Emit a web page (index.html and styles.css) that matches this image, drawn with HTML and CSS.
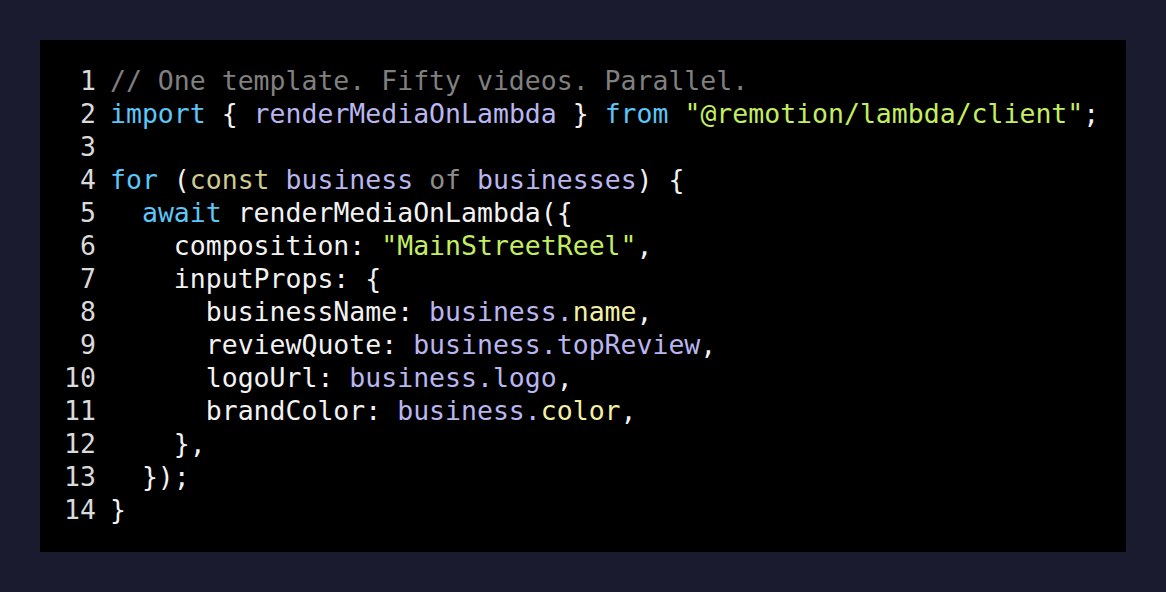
FILE: index.html
```html
<!DOCTYPE html>
<html>
<head>
<meta charset="utf-8">
<link rel="stylesheet" href="styles.css">
</head>
<body>
<div class="page">
  <div class="code">
    <div class="line"><span class="ln">1</span><span class="src"><span class="cm">// One template. Fifty videos. Parallel.</span></span></div>
    <div class="line"><span class="ln">2</span><span class="src"><span class="kw">import</span> { <span class="id">renderMediaOnLambda</span> } <span class="kw">from</span> <span class="str">"@remotion/lambda/client"</span>;</span></div>
    <div class="line"><span class="ln">3</span><span class="src"></span></div>
    <div class="line"><span class="ln">4</span><span class="src"><span class="kw">for</span> (<span class="dc">const</span> <span class="id">business</span> <span class="of">of</span> <span class="id">businesses</span>) {</span></div>
    <div class="line"><span class="ln">5</span><span class="src">  <span class="kw">await</span> renderMediaOnLambda({</span></div>
    <div class="line"><span class="ln">6</span><span class="src">    composition: <span class="str">"MainStreetReel"</span>,</span></div>
    <div class="line"><span class="ln">7</span><span class="src">    inputProps: {</span></div>
    <div class="line"><span class="ln">8</span><span class="src">      businessName: <span class="id">business.</span><span class="pr">name</span>,</span></div>
    <div class="line"><span class="ln">9</span><span class="src">      reviewQuote: <span class="id">business.topReview</span>,</span></div>
    <div class="line"><span class="ln">10</span><span class="src">      logoUrl: <span class="id">business.logo</span>,</span></div>
    <div class="line"><span class="ln">11</span><span class="src">      brandColor: <span class="id">business.</span><span class="pr">color</span>,</span></div>
    <div class="line"><span class="ln">12</span><span class="src">    },</span></div>
    <div class="line"><span class="ln">13</span><span class="src">  });</span></div>
    <div class="line"><span class="ln">14</span><span class="src">}</span></div>
  </div>
</div>
</body>
</html>
```
FILE: styles.css
```css
html, body {
  margin: 0;
  padding: 0;
  background: #1b1b2f;
}
.page {
  padding: 40px;
  width: 1086px;
}
.code {
  background: #000;
  height: 512px;
  box-sizing: border-box;
  padding: 24px 24px 0 24px;
  font-family: "DejaVu Sans Mono", monospace;
  font-size: 26.5px;
  line-height: 33px;
  color: #f2f2f2;
}
.line {
  display: flex;
  white-space: pre;
  height: 33px;
}
.ln {
  width: 32px;
  text-align: right;
  margin-right: 14px;
  color: #dadada;
  flex: none;
}
.src { white-space: pre; }
.cm { color: #808080; }
.kw { color: #5cc6f8; }
.id { color: #b9b6f0; }
.str { color: #c4ee62; }
.dc { color: #cfcb90; }
.of { color: #8c8c8c; }
.pr { color: #f2f0a4; }
```
